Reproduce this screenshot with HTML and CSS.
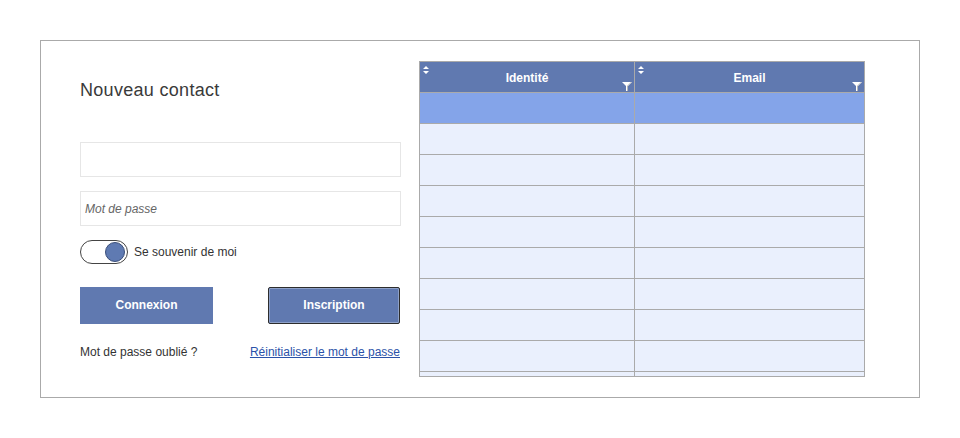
FILE: index.html
```html
<!DOCTYPE html>
<html lang="fr">
<head>
<meta charset="utf-8">
<title>Nouveau contact</title>
<link rel="stylesheet" href="styles.css">
</head>
<body>
<div class="panel">
  <form class="form">
    <h1 class="title">Nouveau contact</h1>
    <input class="field" type="text">
    <input class="field field-pass" type="password" placeholder="Mot de passe">
    <label class="remember">
      <span class="toggle"><span class="knob"></span></span>
      <span>Se souvenir de moi</span>
    </label>
    <div class="buttons">
      <button type="button" class="btn">Connexion</button>
      <button type="button" class="btn btn-focus">Inscription</button>
    </div>
    <div class="links">
      <span>Mot de passe oublié ?</span>
      <a href="#" class="link">Réinitialiser le mot de passe</a>
    </div>
  </form>
  <div class="grid">
    <div class="grid-head">
      <div class="hcell">
        <svg class="sort" width="6" height="8" viewBox="0 0 6 8"><path d="M0 3 L3 0 L6 3 Z M0 5 L3 8 L6 5 Z" fill="#fff"/></svg>
        <span>Identité</span>
        <svg class="filter" width="10" height="9" viewBox="0 0 10 9"><path d="M0 0 H10 L6 4 V9 H4 V4 Z" fill="#fff"/><path d="M6 4 V9 H5 V4 L9 0 H10 Z" fill="#b8b8b8"/></svg>
      </div>
      <div class="hcell">
        <svg class="sort" width="6" height="8" viewBox="0 0 6 8"><path d="M0 3 L3 0 L6 3 Z M0 5 L3 8 L6 5 Z" fill="#fff"/></svg>
        <span>Email</span>
        <svg class="filter" width="10" height="9" viewBox="0 0 10 9"><path d="M0 0 H10 L6 4 V9 H4 V4 Z" fill="#fff"/><path d="M6 4 V9 H5 V4 L9 0 H10 Z" fill="#b8b8b8"/></svg>
      </div>
    </div>
    <div class="grid-body">
      <div class="row selected"><div class="cell"></div><div class="cell"></div></div>
      <div class="row"><div class="cell"></div><div class="cell"></div></div>
      <div class="row"><div class="cell"></div><div class="cell"></div></div>
      <div class="row"><div class="cell"></div><div class="cell"></div></div>
      <div class="row"><div class="cell"></div><div class="cell"></div></div>
      <div class="row"><div class="cell"></div><div class="cell"></div></div>
      <div class="row"><div class="cell"></div><div class="cell"></div></div>
      <div class="row"><div class="cell"></div><div class="cell"></div></div>
      <div class="row"><div class="cell"></div><div class="cell"></div></div>
      <div class="row"><div class="cell"></div><div class="cell"></div></div>
    </div>
  </div>
</div>
</body>
</html>
```
FILE: styles.css
```css
* { box-sizing: border-box; }
html, body { margin: 0; padding: 0; background: #fff; }
body {
  font-family: "Liberation Sans", Arial, sans-serif;
  color: #333;
  font-size: 12px;
  padding: 40px 0 0 40px;
}
.panel {
  width: 880px;
  height: 358px;
  border: 1px solid #aaa;
  display: flex;
  align-items: flex-start;
}
.form {
  width: 320px;
  margin: 38px 0 0 39px;
  display: flex;
  flex-direction: column;
}
.title {
  margin: 0;
  font-size: 18px;
  font-weight: normal;
  line-height: 22px;
  letter-spacing: 0.3px;
  color: #3a3a3a;
}
.field {
  margin: 41px 0 0 0;
  width: 321px;
  height: 35px;
  border: 1px solid #e6e6e6;
  padding: 0 4px;
  font-family: "Liberation Sans", Arial, sans-serif;
  font-size: 12px;
  background: #fff;
  outline: none;
}
.field-pass { margin-top: 14px; }
.field::placeholder { color: #666; font-style: italic; }
.remember {
  margin-top: 14px;
  display: flex;
  align-items: center;
  gap: 6px;
  height: 24px;
}
.toggle {
  width: 48px;
  height: 24px;
  border: 1px solid #444;
  border-radius: 12px;
  background: #fff;
  display: flex;
  justify-content: flex-end;
  align-items: center;
  padding-right: 2px;
}
.knob {
  width: 20px;
  height: 20px;
  border-radius: 50%;
  background: #5f7ab2;
  border: 1px solid #3b4f7a;
}
.buttons {
  margin-top: 23px;
  display: flex;
  justify-content: space-between;
  width: 320px;
}
.btn {
  width: 133px;
  height: 37px;
  background: #6079b0;
  color: #fff;
  border: none;
  font-family: "Liberation Sans", Arial, sans-serif;
  font-size: 12px;
  font-weight: bold;
  padding: 0 0 2px 0;
}
.btn-focus {
  width: 132px;
  border: 1px solid #2d2d2d;
  border-radius: 2px;
  box-shadow: inset 0 0 0 1px #8da0c8;
}
.links {
  margin-top: 21px;
  display: flex;
  justify-content: space-between;
  width: 320px;
  line-height: 14px;
}
.link { color: #2b52a8; text-decoration: underline; }
.grid {
  margin: 20px 0 0 19px;
  width: 446px;
  height: 316px;
  border: 1px solid #aaa;
  overflow: hidden;
  background: #eaf0fd;
}
.grid-head {
  display: grid;
  grid-template-columns: 214px 1fr;
  height: 31px;
  background: #6079b0;
  border-bottom: 1px solid #aaa;
}
.hcell {
  position: relative;
  display: flex;
  justify-content: center;
  align-items: center;
  color: #fff;
  font-weight: bold;
  font-size: 12px;
  padding-top: 2px;
}
.hcell + .hcell { border-left: 1px solid #aaa; }
.sort { position: absolute; left: 3px; top: 4px; }
.filter { position: absolute; right: 2px; bottom: 1px; }
.grid-body { display: flex; flex-direction: column; }
.row {
  display: grid;
  grid-template-columns: 214px 1fr;
  height: 31px;
  flex: none;
  border-bottom: 1px solid #aaa;
}
.cell + .cell { border-left: 1px solid #aaa; }
.row.selected { background: #84a4e9; }
```
